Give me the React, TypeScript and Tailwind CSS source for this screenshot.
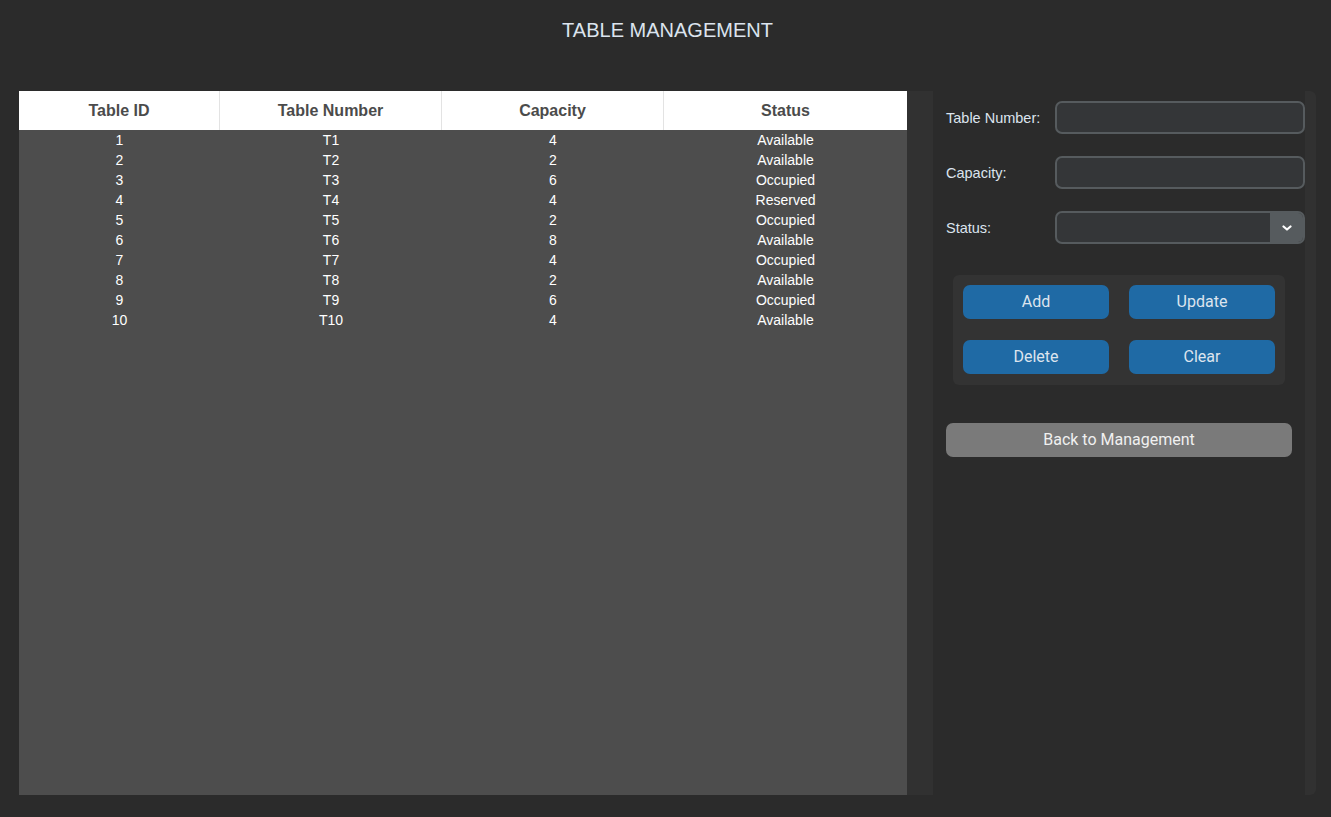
import React from "react";

type Row = { id: number; number: string; capacity: number; status: string };

const rows: Row[] = [
  { id: 1, number: "T1", capacity: 4, status: "Available" },
  { id: 2, number: "T2", capacity: 2, status: "Available" },
  { id: 3, number: "T3", capacity: 6, status: "Occupied" },
  { id: 4, number: "T4", capacity: 4, status: "Reserved" },
  { id: 5, number: "T5", capacity: 2, status: "Occupied" },
  { id: 6, number: "T6", capacity: 8, status: "Available" },
  { id: 7, number: "T7", capacity: 4, status: "Occupied" },
  { id: 8, number: "T8", capacity: 2, status: "Available" },
  { id: 9, number: "T9", capacity: 6, status: "Occupied" },
  { id: 10, number: "T10", capacity: 4, status: "Available" },
];

const cols = ["w-[201px]", "w-[222px]", "w-[222px]", "flex-1"];

const Field = ({ label, select }: { label: string; select?: boolean }) => (
  <div className="flex items-center h-[33px]">
    <span className="w-[122px] shrink-0 pl-[13px] pt-[2px] text-[14.5px] text-[#dce4ee]">{label}</span>
    <div className="flex h-[33px] w-[250px] shrink-0 rounded-[7px] border-2 border-[#565b5e] bg-[#343638] overflow-hidden">
      <div className="flex-1" />
      {select && (
        <div className="flex w-[33px] items-center justify-center bg-[#565b5e]">
          <svg width="10" height="6" viewBox="0 0 10 6" fill="none">
            <path d="M1.5 1.5 L5 4.5 L8.5 1.5" stroke="#ffffff" strokeWidth="2.2" strokeLinecap="round" strokeLinejoin="round" />
          </svg>
        </div>
      )}
    </div>
  </div>
);

const Btn = ({ label }: { label: string }) => (
  <button className="h-[34px] w-[146px] rounded-[7px] bg-[#1f6aa5] text-[16px] text-[#dce4ee] font-['Roboto',sans-serif]">
    {label}
  </button>
);

export default function App() {
  return (
    <div className="flex h-[817px] w-[1331px] flex-col bg-[#2b2b2b] font-['Liberation_Sans',Arial,sans-serif]">
      <div className="flex h-[60px] items-center justify-center pl-[4px] text-[20px] text-[#dce4ee]">
        TABLE MANAGEMENT
      </div>

      <div className="mt-[31px] flex pl-[19px]">
        <div className="flex h-[704px] w-[888px] flex-col bg-[#4d4d4d]">
          <div className="flex h-[39px] bg-white text-[16px] font-bold text-[#4b4b4b]">
            {["Table ID", "Table Number", "Capacity", "Status"].map((h, i) => (
              <div
                key={h}
                className={`${cols[i]} flex items-center justify-center ${i < 3 ? "border-r border-[#e3e3e3]" : ""}`}
              >
                {h}
              </div>
            ))}
          </div>
          {rows.map((r) => (
            <div key={r.id} className="flex h-[20px] items-center text-[14px] text-white">
              <div className={`${cols[0]} text-center`}>{r.id}</div>
              <div className={`${cols[1]} text-center`}>{r.number}</div>
              <div className={`${cols[2]} text-center`}>{r.capacity}</div>
              <div className={`${cols[3]} text-center`}>{r.status}</div>
            </div>
          ))}
        </div>

        <div className="flex h-[704px] w-[409px] rounded-r-[6px] bg-[#313131] pl-[26px] pr-[11px]">
          <div className="flex flex-1 flex-col bg-[#2b2b2b] pt-[10px]">
            <div className="flex flex-col gap-[22px]">
              <Field label="Table Number:" />
              <Field label="Capacity:" />
              <Field label="Status:" select />
            </div>

            <div className="ml-[20px] mt-[31px] grid w-[332px] grid-cols-2 gap-x-[20px] gap-y-[21px] rounded-[6px] bg-[#333333] px-[10px] pb-[11px] pt-[10px]">
              <Btn label="Add" />
              <Btn label="Update" />
              <Btn label="Delete" />
              <Btn label="Clear" />
            </div>

            <button className="ml-[13px] mt-[38px] h-[34px] w-[346px] rounded-[7px] bg-[#7a7a7a] text-[16px] text-[#f0f0f0] font-['Roboto',sans-serif]">
              Back to Management
            </button>
          </div>
        </div>
      </div>
    </div>
  );
}
